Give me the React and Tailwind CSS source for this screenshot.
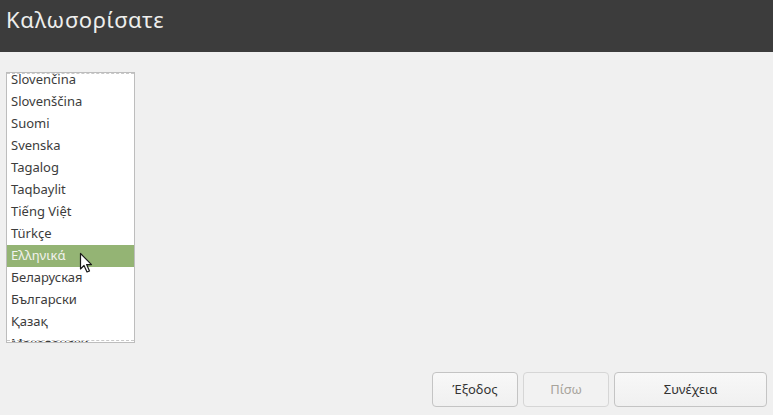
import React from "react";

const languages = [
    "Slovenčina",
    "Slovenščina",
    "Suomi",
    "Svenska",
    "Tagalog",
    "Taqbaylit",
    "Tiếng Việt",
    "Türkçe",
    "Ελληνικά",
    "Беларуская",
    "Български",
    "Қазақ",
    "Македонски",
];

const selected = "Ελληνικά";

function Cursor() {
    return (
        <svg className="absolute left-[79px] top-[252px]" width="16" height="22" viewBox="0 0 16 22">
            <path d="M1.5 1.5 L1.5 17 L5 13.5 L8 20 L10.5 19 L7.6 12.6 L12.5 12.6 Z" fill="#ffffff" stroke="#1a1a1a" strokeWidth="1.2" strokeLinejoin="round" />
        </svg>
    );
}

export default function App() {
    return (
        <div className="relative w-[773px] h-[415px] flex flex-col bg-[#f0f0f0] overflow-hidden" style={{ fontFamily: '"Noto Sans", "DejaVu Sans", sans-serif' }}>
            <div className="h-[52px] shrink-0 bg-[#3c3c3c] flex items-start pl-[6px] pt-[4px]">
                <h1 className="text-[22px] leading-[30px] text-[#eeeeec] tracking-[0.7px]">Καλωσορίσατε</h1>
            </div>

            <div className="flex-1 flex flex-col">
                <div className="relative mt-[20px] ml-[6px] w-[129px] h-[271px] bg-white border border-[#bdbdbd] overflow-hidden">
                    <div className="-mt-[4px]">
                        {languages.map(l => (
                            <div key={l}
                                className={`h-[22px] pl-[4px] flex items-center text-[13px] ${l === selected ? 'bg-[#94b474] text-[#f2f2ee]' : 'text-[#3c3c3c]'}`}>
                                {l}
                            </div>
                        ))}
                    </div>
                    <div className="absolute left-0 right-0 top-0 border-t border-dashed border-[#c8c8c8]" />
                    <div className="absolute left-0 right-0 bottom-[1px] border-t border-dashed border-[#c8c8c8]" />
                </div>

                <div className="flex-1" />

                <div className="flex justify-end gap-[5px] pr-[6px] pb-[8px]">
                    <button className="w-[86px] h-[35px] rounded-[4px] border border-[#c4c4c4] bg-gradient-to-b from-[#f8f8f8] to-[#f0f0f0] text-[13px] text-[#333333]">Έξοδος</button>
                    <button disabled className="w-[86px] h-[35px] rounded-[4px] border border-[#d6d6d6] bg-[#f2f2f2] text-[13px] text-[#a8a49c]">Πίσω</button>
                    <button className="w-[153px] h-[35px] rounded-[4px] border border-[#c4c4c4] bg-gradient-to-b from-[#f8f8f8] to-[#f0f0f0] text-[13px] text-[#333333]">Συνέχεια</button>
                </div>
            </div>

            <Cursor />
        </div>
    );
}
